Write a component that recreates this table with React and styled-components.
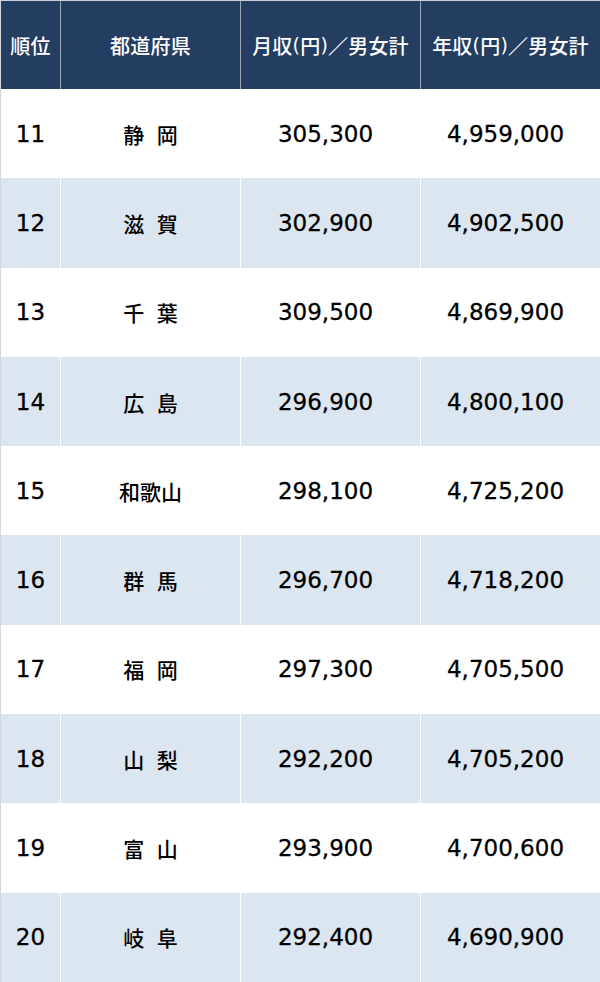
import React from 'react';
import styled, { createGlobalStyle } from 'styled-components';

const GlobalStyle = createGlobalStyle`
  html, body {
    margin: 0;
    padding: 0;
    background: #ffffff;
  }
`;

const Table = styled.div`
  width: 600px;
  height: 982px;
  display: flex;
  flex-direction: column;
  box-sizing: border-box;
  border-left: 1px solid #d3d8df;
  font-family: "DejaVu Sans", "Noto Sans CJK JP", sans-serif;
  color: #000000;
`;

const Row = styled.div`
  display: grid;
  grid-template-columns: 59px 180px 180px 1fr;
  flex: ${(p) => (p.$head ? '0 0 89px' : '1 1 0')};
  background: ${(p) => (p.$head ? '#243e61' : p.$alt ? '#dce6f1' : '#ffffff')};
  box-sizing: border-box;
  border-top: ${(p) => (p.$head ? '1px solid #c9d0da' : 'none')};
`;

const HeadCell = styled.div`
  display: flex;
  align-items: center;
  justify-content: center;
  color: #ffffff;
  font-family: "Noto Sans CJK JP", sans-serif;
  font-size: 20px;
  font-weight: 500;
  letter-spacing: 0.2px;
  border-left: ${(p) => (p.$first ? 'none' : '1px solid #9aa7b8')};
  white-space: nowrap;
`;

const Paren = styled.span`
  font-family: "DejaVu Sans", sans-serif;
  font-weight: 400;
  font-size: 19px;
`;

const Cell = styled.div`
  display: flex;
  align-items: center;
  justify-content: center;
  border-left: ${(p) => (p.$first ? 'none' : '1px solid #ffffff')};
  font-size: 23px;
  -webkit-text-stroke: 0.3px #000000;
  padding-right: ${(p) => (p.$num ? '10px' : '0')};
`;

const Pref = styled.span`
  font-family: "Noto Sans CJK JP", sans-serif;
  font-size: 21px;
  font-weight: 500;
  word-spacing: 8px;
  -webkit-text-stroke: 0;
`;

const data = [
  ['11', '静 岡', '305,300', '4,959,000'],
  ['12', '滋 賀', '302,900', '4,902,500'],
  ['13', '千 葉', '309,500', '4,869,900'],
  ['14', '広 島', '296,900', '4,800,100'],
  ['15', '和歌山', '298,100', '4,725,200'],
  ['16', '群 馬', '296,700', '4,718,200'],
  ['17', '福 岡', '297,300', '4,705,500'],
  ['18', '山 梨', '292,200', '4,705,200'],
  ['19', '富 山', '293,900', '4,700,600'],
  ['20', '岐 阜', '292,400', '4,690,900'],
];

export default function App() {
  return (
    <>
      <GlobalStyle />
      <Table>
        <Row $head>
          <HeadCell $first>順位</HeadCell>
          <HeadCell>都道府県</HeadCell>
          <HeadCell>
            月収<Paren>(</Paren>円<Paren>)</Paren>／男女計
          </HeadCell>
          <HeadCell>
            年収<Paren>(</Paren>円<Paren>)</Paren>／男女計
          </HeadCell>
        </Row>
        {data.map((r, i) => (
          <Row key={r[0]} $alt={i % 2 === 1}>
            <Cell $first>{r[0]}</Cell>
            <Cell>
              <Pref>{r[1]}</Pref>
            </Cell>
            <Cell $num>{r[2]}</Cell>
            <Cell $num>{r[3]}</Cell>
          </Row>
        ))}
      </Table>
    </>
  );
}
